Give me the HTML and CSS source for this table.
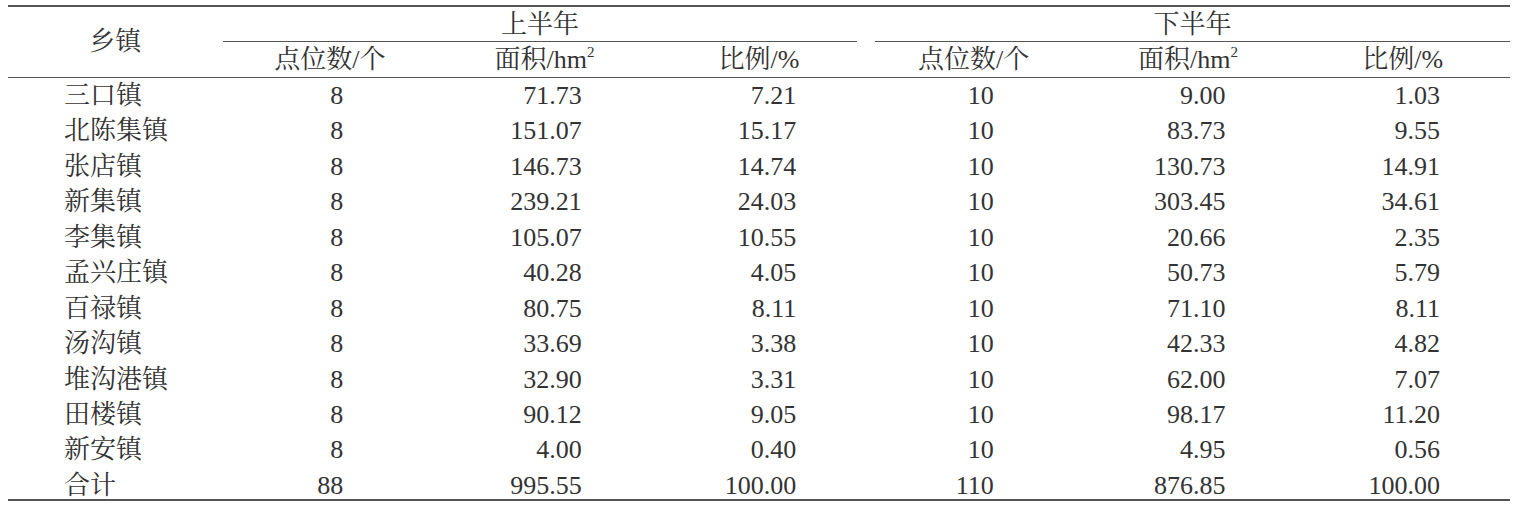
FILE: index.html
```html
<!DOCTYPE html>
<html lang="en">
<head>
    <meta charset="UTF-8">
    <meta name="viewport" content="width=device-width, initial-scale=1.0">
    <title>乡镇点位数与面积统计</title>
    <link rel="stylesheet" href="styles.css">
</head>
<body>

    <!-- Tabel: per halfjaar -->
    <table class="stats-table">
        <colgroup>
            <col><col><col><col><col><col><col>
        </colgroup>
        <thead>
            <tr class="group-row">
                <th rowspan="2" class="town-head">乡镇</th>
                <th colspan="3" class="group"><div class="group-label first-half">上半年</div></th>
                <th colspan="3" class="group"><div class="group-label second-half">下半年</div></th>
            </tr>
            <tr class="sub-row">
                <th>点位数/个</th>
                <th>面积/hm<sup>2</sup></th>
                <th>比例/%</th>
                <th>点位数/个</th>
                <th>面积/hm<sup>2</sup></th>
                <th>比例/%</th>
            </tr>
        </thead>
        <tbody>
            <tr><td>三口镇</td><td class="count-a">8</td><td>71.73</td><td>7.21</td><td class="count-b">10</td><td>9.00</td><td>1.03</td></tr>
            <tr><td>北陈集镇</td><td class="count-a">8</td><td>151.07</td><td>15.17</td><td class="count-b">10</td><td>83.73</td><td>9.55</td></tr>
            <tr><td>张店镇</td><td class="count-a">8</td><td>146.73</td><td>14.74</td><td class="count-b">10</td><td>130.73</td><td>14.91</td></tr>
            <tr><td>新集镇</td><td class="count-a">8</td><td>239.21</td><td>24.03</td><td class="count-b">10</td><td>303.45</td><td>34.61</td></tr>
            <tr><td>李集镇</td><td class="count-a">8</td><td>105.07</td><td>10.55</td><td class="count-b">10</td><td>20.66</td><td>2.35</td></tr>
            <tr><td>孟兴庄镇</td><td class="count-a">8</td><td>40.28</td><td>4.05</td><td class="count-b">10</td><td>50.73</td><td>5.79</td></tr>
            <tr><td>百禄镇</td><td class="count-a">8</td><td>80.75</td><td>8.11</td><td class="count-b">10</td><td>71.10</td><td>8.11</td></tr>
            <tr><td>汤沟镇</td><td class="count-a">8</td><td>33.69</td><td>3.38</td><td class="count-b">10</td><td>42.33</td><td>4.82</td></tr>
            <tr><td>堆沟港镇</td><td class="count-a">8</td><td>32.90</td><td>3.31</td><td class="count-b">10</td><td>62.00</td><td>7.07</td></tr>
            <tr><td>田楼镇</td><td class="count-a">8</td><td>90.12</td><td>9.05</td><td class="count-b">10</td><td>98.17</td><td>11.20</td></tr>
            <tr><td>新安镇</td><td class="count-a">8</td><td>4.00</td><td>0.40</td><td class="count-b">10</td><td>4.95</td><td>0.56</td></tr>
            <tr class="total-row"><td>合计</td><td class="count-a">88</td><td>995.55</td><td>100.00</td><td class="count-b">110</td><td>876.85</td><td>100.00</td></tr>
        </tbody>
    </table>

</body>
</html>
```

FILE: styles.css
```css
body {
    margin: 0;
    background-color: #ffffff;
    font-family: "Liberation Serif", "Noto Serif CJK SC", "Noto Sans CJK SC", serif;
    color: #333333;
}

.stats-table {
    margin: 5px 0 0 8px;
    width: 1502px;
    table-layout: fixed;
    border-collapse: collapse;
    border-top: 2px solid #555555;
    border-bottom: 2px solid #555555;
}

.stats-table th,
.stats-table td {
    font-family: "Liberation Serif", "Noto Serif CJK SC", "Noto Sans CJK SC", serif;
    font-size: 26px;
    line-height: 26px;
}

th {
    font-weight: normal;
    padding: 0;
    text-align: center;
}

/* Kop: groepsregel met lijn eronder */
.group-row th {
    height: 35px;
}

.group {
    vertical-align: bottom;
}

.group-label {
    height: 35px;
    box-sizing: border-box;
    padding-top: 5px;
    border-bottom: 1px solid #555555;
}

.first-half {
    margin-right: 9px;
}

.second-half {
    margin-left: 9px;
}

.town-head {
    vertical-align: middle;
    border-bottom: 1px solid #555555;
}

.sub-row th {
    height: 30px;
    padding-top: 5px;
    vertical-align: top;
    border-bottom: 1px solid #555555;
}

sup {
    font-size: 15px;
    line-height: 0;
    vertical-align: 11px;
}

/* Data */
td {
    height: 30.45px;
    padding: 5px 70px 0 0;
    vertical-align: top;
    text-align: right;
    white-space: nowrap;
}

td:first-child {
    text-align: left;
    padding: 5px 0 0 56px;
}

td.count-a {
    padding-right: 94px;
}

td.count-b {
    padding-right: 87px;
}

.total-row td {
    height: 24px;
}
```
